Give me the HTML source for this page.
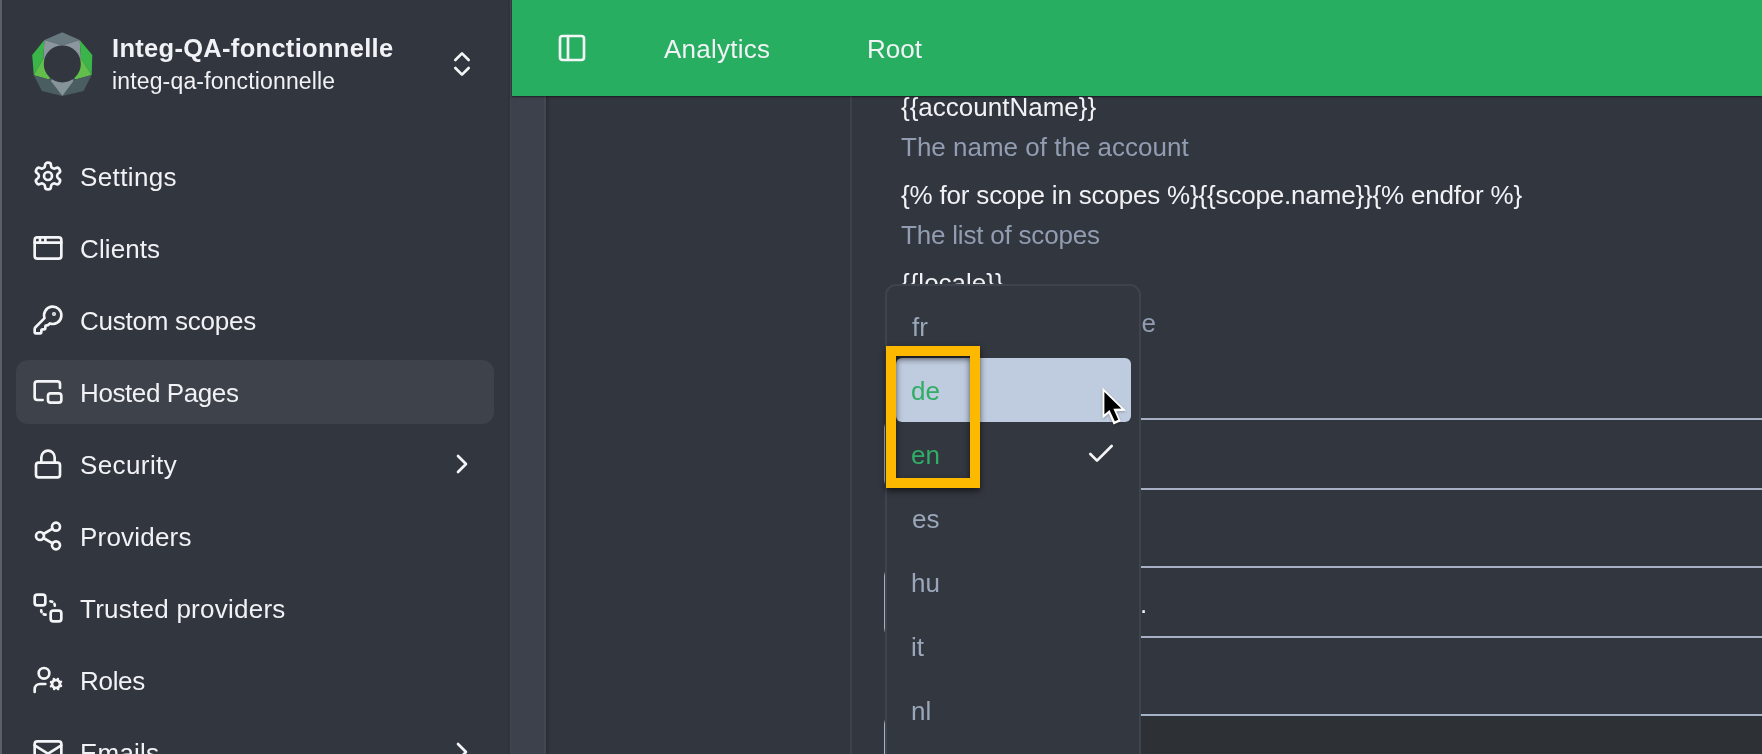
<!DOCTYPE html>
<html lang="en">
<head>
<meta charset="utf-8">
<title>Hosted Pages</title>
<style>
*{box-sizing:border-box;margin:0;padding:0}
html,body{width:1762px;height:754px;overflow:hidden;background:#3d414b;font-family:"Liberation Sans",sans-serif;color:#f1f2f5}
.abs{position:absolute}
#sidebar{position:absolute;left:0;top:0;width:511px;height:754px;background:#32363f;border-right:1px solid #42464f;box-shadow:inset -2px 0 0 #2f333b}
#edge{position:absolute;left:0;top:0;width:2px;height:754px;background:#5c5f69;box-shadow:1px 0 0 #2f333b}
.t{will-change:transform;position:absolute;white-space:nowrap;line-height:1;font-size:26px}
svg.ic{position:absolute;width:32px;height:32px;fill:none;stroke:#f4f5f7;stroke-width:2;stroke-linecap:round;stroke-linejoin:round}
#active{position:absolute;left:16px;top:360px;width:478px;height:64px;border-radius:12px;background:#3e424b}
#header{position:absolute;left:512px;top:0;width:1250px;height:96px;background:#27ae60;box-shadow:0 1px 1.5px rgba(0,0,0,.5);z-index:5}
#card{position:absolute;left:544px;top:60px;width:1300px;height:800px;background:#32363f;border-left:2px solid #43474f;box-shadow:inset 3px 0 3px -1px rgba(0,0,0,.18)}
#vline{position:absolute;left:850px;top:96px;width:2px;height:660px;background:#3e424c}
.inp{position:absolute;left:884px;width:920px;height:72px;border:2px solid #a7afc4;border-radius:10px}
#dd{position:absolute;left:885px;top:284px;width:256px;height:520px;border:2px solid #3f434d;border-radius:11px;background:#33373f;z-index:3}
#hov{position:absolute;left:896px;top:358px;width:235px;height:64px;border-radius:6px;background:#bfcbde;z-index:4}
#ybox{position:absolute;left:886px;top:346px;width:94px;height:142px;border:10px solid #fcb900;z-index:6;filter:drop-shadow(.5px 3px 3px rgba(0,0,0,.6))}
.z4{z-index:4}
</style>
</head>
<body>
<div id="sidebar"></div>
<div id="edge"></div>

<!-- logo -->
<svg class="abs" style="left:30px;top:31px" width="64" height="66" viewBox="0 0 64 66">
<g id="logo">
<polygon points="14.4,8.9 32.2,1.2 49.7,8.9 32.2,14.6" fill="#67797f"/>
<polygon points="14.4,8.9 32.2,14.6 32.3,32.9 13.3,27.6" fill="#8b969e"/>
<polygon points="49.7,8.9 32.2,14.6 32.3,32.9 51.0,27.6" fill="#8b969e"/>
<polygon points="14.4,8.9 2.2,23.9 3.8,44.2 13.3,27.6" fill="#3bb54a"/>
<polygon points="49.7,8.9 62.3,23.9 61.7,43.9 51.0,27.6" fill="#3bb54a"/>
<polygon points="3.8,44.2 13.3,27.6 32.3,32.9 18.9,48.5" fill="#62bf4b"/>
<polygon points="61.7,43.9 51.0,27.6 32.3,32.9 45.4,48.5" fill="#62bf4b"/>
<polygon points="3.8,44.2 11.9,60.0 32.4,64.9 20.7,50.1 32.3,32.9 18.9,48.5" fill="#4a5d61"/>
<polygon points="61.7,43.9 53.5,60.0 32.4,64.9 43.6,50.1 32.3,32.9 45.4,48.5" fill="#4a5d61"/>
<polygon points="20.7,50.1 43.6,50.1 32.4,64.9" fill="#87939b"/>
<polygon points="20.7,50.1 43.6,50.1 32.3,32.9" fill="#87939b"/>
<circle cx="32.3" cy="32.9" r="18.5" fill="#32363f"/>
</g>
</svg>

<div class="t" style="left:112px;top:36px;font-weight:bold;font-size:25.5px;letter-spacing:.3px" id="t_title">Integ-QA-fonctionnelle</div>
<div class="t" style="left:112px;top:70px;font-size:23px;letter-spacing:.15px" id="t_sub">integ-qa-fonctionnelle</div>
<svg class="ic" style="left:446px;top:48px" viewBox="0 0 24 24"><path d="m7 15 5 5 5-5"/><path d="m7 9 5-5 5 5"/></svg>

<div id="active"></div>

<!-- menu -->
<svg class="ic" style="left:32px;top:160px" viewBox="0 0 24 24"><path d="M12.22 2h-.44a2 2 0 0 0-2 2v.18a2 2 0 0 1-1 1.730l-.43.250a2 2 0 0 1-2 0l-.15-.08a2 2 0 0 0-2.730.730l-.22.380a2 2 0 0 0 .730 2.730l.15.100a2 2 0 0 1 1 1.720v.510a2 2 0 0 1-1 1.740l-.15.090a2 2 0 0 0-.730 2.730l.22.380a2 2 0 0 0 2.730.730l.15-.08a2 2 0 0 1 2 0l.43.250a2 2 0 0 1 1 1.730V20a2 2 0 0 0 2 2h.44a2 2 0 0 0 2-2v-.18a2 2 0 0 1 1-1.730l.43-.250a2 2 0 0 1 2 0l.15.080a2 2 0 0 0 2.730-.730l.22-.390a2 2 0 0 0-.730-2.730l-.15-.08a2 2 0 0 1-1-1.740v-.5a2 2 0 0 1 1-1.740l.15-.09a2 2 0 0 0 .730-2.730l-.22-.380a2 2 0 0 0-2.730-.730l-.15.080a2 2 0 0 1-2 0l-.43-.250a2 2 0 0 1-1-1.730V4a2 2 0 0 0-2-2z"/><circle cx="12" cy="12" r="3"/></svg>
<div class="t" style="left:79.500px;top:163.5px;letter-spacing:0.38px" id="t_m0">Settings</div>

<svg class="ic" style="left:32px;top:232px" viewBox="0 0 24 24"><rect x="2" y="4" width="20" height="16" rx="2"/><path d="M10 4v4"/><path d="M2 8h20"/><path d="M6 4v4"/></svg>
<div class="t" style="left:79.500px;top:235.5px;letter-spacing:0.10px" id="t_m1">Clients</div>

<svg class="ic" style="left:32px;top:304px" viewBox="0 0 24 24"><path d="M2.586 17.414A2 2 0 0 0 2 18.828V21a1 1 0 0 0 1 1h3a1 1 0 0 0 1-1v-1a1 1 0 0 1 1-1h1a1 1 0 0 0 1-1v-1a1 1 0 0 1 1-1h.172a2 2 0 0 0 1.414-.586l.814-.814a6.500 6.500 0 1 0-4-4z"/><circle cx="16.500" cy="7.500" r=".5" fill="#f4f5f7"/></svg>
<div class="t" style="left:79.500px;top:307.5px;letter-spacing:-0.25px" id="t_m2">Custom scopes</div>

<svg class="ic" style="left:32px;top:376px" viewBox="0 0 24 24"><path d="M21 9V6a2 2 0 0 0-2-2H4a2 2 0 0 0-2 2v10c0 1.100.9 2 2 2h4"/><rect width="10" height="7" x="12" y="13" rx="2"/></svg>
<div class="t" style="left:79.500px;top:379.5px;letter-spacing:-0.40px" id="t_m3">Hosted Pages</div>

<svg class="ic" style="left:32px;top:448px" viewBox="0 0 24 24"><rect width="18" height="11" x="3" y="11" rx="2" ry="2"/><path d="M7 11V7a5 5 0 0 1 10 0v4"/></svg>
<div class="t" style="left:79.500px;top:451.5px;letter-spacing:0.40px" id="t_m4">Security</div>
<svg class="ic" style="left:446px;top:448px" viewBox="0 0 24 24"><path d="m9 18 6-6-6-6"/></svg>

<svg class="ic" style="left:32px;top:520px" viewBox="0 0 24 24"><circle cx="18" cy="5" r="3"/><circle cx="6" cy="12" r="3"/><circle cx="18" cy="19" r="3"/><line x1="8.59" x2="15.42" y1="13.51" y2="17.49"/><line x1="15.41" x2="8.59" y1="6.51" y2="10.49"/></svg>
<div class="t" style="left:79.500px;top:523.5px;letter-spacing:0.20px" id="t_m5">Providers</div>

<svg class="ic" style="left:32px;top:592px" viewBox="0 0 24 24"><rect x="2" y="2" width="8" height="8" rx="2"/><rect x="14" y="14" width="8" height="8" rx="2"/><path d="M13.800 7a3.300 3.300 0 0 1 3.300 3.300" stroke-dasharray="1.500 2.200"/><path d="M10.200 17a3.300 3.300 0 0 1-3.300-3.300" stroke-dasharray="1.500 2.200"/></svg>
<div class="t" style="left:79.500px;top:595.5px;letter-spacing:0.25px" id="t_m6">Trusted providers</div>

<svg class="ic" style="left:32px;top:664px" viewBox="0 0 24 24"><circle cx="18" cy="15" r="3"/><circle cx="9" cy="7" r="4"/><path d="M10 15H6a4 4 0 0 0-4 4v2"/><path d="m21.700 16.400-.9-.3"/><path d="m15.200 13.900-.9-.3"/><path d="m16.600 18.700.3-.9"/><path d="m19.100 12.200.3-.9"/><path d="m19.600 18.700-.4-1"/><path d="m16.800 12.300-.4-1"/><path d="m14.300 16.600 1-.4"/><path d="m20.700 13.800 1-.4"/></svg>
<div class="t" style="left:79.500px;top:667.5px;letter-spacing:-0.30px" id="t_m7">Roles</div>

<svg class="ic" style="left:32px;top:736px" viewBox="0 0 24 24"><rect width="20" height="16" x="2" y="4" rx="2"/><path d="m22 7-8.970 5.700a1.940 1.940 0 0 1-2.060 0L2 7"/></svg>
<div class="t" style="left:79.500px;top:739.5px;letter-spacing:0.20px" id="t_m8">Emails</div>
<svg class="ic" style="left:446px;top:736px" viewBox="0 0 24 24"><path d="m9 18 6-6-6-6"/></svg>

<!-- main -->
<div id="card"></div>
<div id="vline"></div>

<div class="t" style="left:901px;top:93.5px" id="t_v0">{{accountName}}</div>
<div class="t" style="left:901px;top:133.7px;color:#929db2" id="t_d0">The name of the account</div>
<div class="t" style="left:901px;top:182px;letter-spacing:-.18px" id="t_v1">{% for scope in scopes %}{{scope.name}}{% endfor %}</div>
<div class="t" style="left:901px;top:221.7px;color:#929db2;letter-spacing:-.2px" id="t_d1">The list of scopes</div>
<div class="t" style="left:901px;top:270px" id="t_v2">{{locale}}</div>
<div class="t" style="left:901px;top:309.7px;color:#929db2;width:255px;text-align:right" id="t_d2">The current language</div>

<div class="inp" style="top:418px"></div>
<div class="inp" style="top:566px"></div>
<div class="inp" style="top:714px;height:100px;background:#2d3034;border-color:#a5b2c7"></div>
<div class="t" style="left:1140px;top:590.5px" id="t_dot">.</div>

<div id="header"></div>
<svg class="ic" style="left:556px;top:32px;z-index:6" viewBox="0 0 24 24"><rect width="18" height="18" x="3" y="3" rx="2"/><path d="M9 3v18"/></svg>
<div class="t" style="left:664px;top:36px;z-index:6;letter-spacing:.25px" id="t_h0">Analytics</div>
<div class="t" style="left:866.5px;top:36px;z-index:6" id="t_h1">Root</div>

<!-- dropdown -->
<div id="dd"></div>
<div id="hov"></div>
<div class="t z4" style="left:912px;top:313.5px;color:#9aa6ba" id="t_o0">fr</div>
<div class="t z4" style="left:911px;top:377.5px;color:#2fae66" id="t_o1">de</div>
<div class="t z4" style="left:911px;top:441.5px;color:#2fae66" id="t_o2">en</div>
<div class="t z4" style="left:911.5px;top:505.5px;color:#9aa6ba" id="t_o3">es</div>
<div class="t z4" style="left:910.5px;top:569.5px;color:#9aa6ba" id="t_o4">hu</div>
<div class="t z4" style="left:910.5px;top:633.5px;color:#9aa6ba" id="t_o5">it</div>
<div class="t z4" style="left:910.5px;top:697.5px;color:#9aa6ba" id="t_o6">nl</div>
<svg class="ic z4" style="left:1085px;top:438px" viewBox="0 0 24 24"><path d="M20 6 9 17l-5-5"/></svg>

<div id="ybox"></div>

<!-- cursor -->
<svg class="abs" style="left:1099px;top:384px;z-index:8;filter:drop-shadow(0 1px 1px rgba(0,0,0,.25))" width="32" height="44" viewBox="0 0 32 44"><polygon points="3.5,3.400 3.500,34.600 9.800,29.600 14.600,40.500 21.800,37.200 17.300,27.200 27.100,26.700" fill="#fff"/><polygon points="5.400,7.900 5.400,30.300 10.500,26.100 15.800,37.300 19.300,35.700 14.400,24.800 22.300,24.400" fill="#000"/></svg>

</body>
</html>
